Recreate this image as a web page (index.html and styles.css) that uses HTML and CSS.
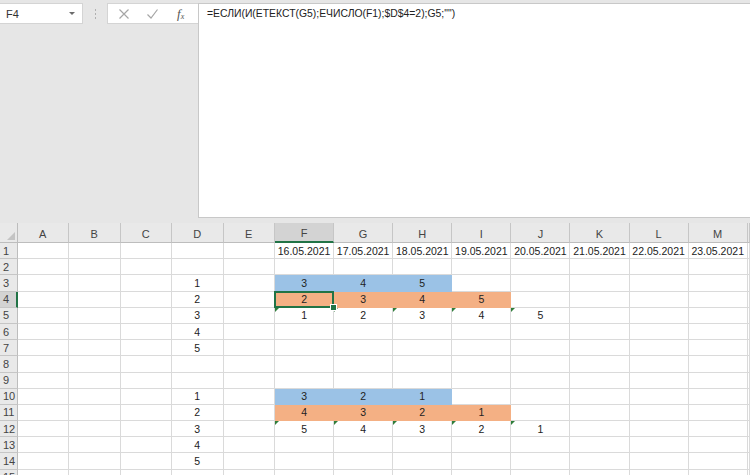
FILE: index.html
```html
<!DOCTYPE html>
<html lang="ru">
<head>
  <meta charset="UTF-8" />
  <title>Книга1 - Excel</title>
  <link rel="stylesheet" href="styles.css">
</head>
<body>
  <div class="toolbar">
    <div class="left-pane">
      <div class="name-box">
        <span>F4</span>
        <span class="drop"></span>
      </div>
      <div class="grip"><i></i><i></i><i></i></div>
      <div class="fx-buttons">
        <svg class="btn" width="12" height="12" viewBox="0 0 12 12">
          <path d="M1.5 1.5L10.5 10.5M10.5 1.5L1.5 10.5" stroke="#a6a6a6" stroke-width="1.2" fill="none"/>
        </svg>
        <svg class="btn" width="13" height="12" viewBox="0 0 13 12">
          <path d="M1.5 6.5L5 10L11.5 1.5" stroke="#a6a6a6" stroke-width="1.2" fill="none"/>
        </svg>
        <span class="fx">f<sub>x</sub></span>
      </div>
    </div>
    <div class="formula">=ЕСЛИ(И(ЕТЕКСТ(G5);ЕЧИСЛО(F1);$D$4=2);G5;"")</div>
  </div>

  <div class="sheet" id="sheet"></div>

  <script src="script.js"></script>
</body>
</html>
```

FILE: styles.css
```css
:root {
  --chrome: #e6e6e6;
  --header: #e9e9e9;
  --header-sel: #d3d3d3;
  --header-line: #c6c6c6;
  --grid: #dadada;
  --green: #217346;
  --blue: #9bc2e6;
  --orange: #f4b084;
}

body {
  margin: 0;
  width: 750px;
  height: 475px;
  overflow: hidden;
  background: var(--chrome);
  font-family: "Liberation Sans", Arial, sans-serif;
  color: #222;
}

.toolbar {
  display: flex;
  height: 218px;
}

.left-pane {
  width: 198px;
  display: flex;
  align-items: flex-start;
  padding-top: 3px;
  box-sizing: border-box;
}

.name-box {
  width: 83px;
  height: 21px;
  background: #fff;
  border: 1px solid #d4d4d4;
  border-left: none;
  box-sizing: border-box;
  display: flex;
  align-items: center;
  justify-content: space-between;
  padding: 0 7px 0 6px;
  font-size: 11px;
  color: #333;
}

.drop {
  width: 0;
  height: 0;
  border-left: 3px solid transparent;
  border-right: 3px solid transparent;
  border-top: 3px solid #6b6b6b;
}

.grip {
  width: 24px;
  height: 21px;
  display: flex;
  flex-direction: column;
  align-items: center;
  justify-content: center;
  gap: 2px;
}

.grip i {
  width: 1px;
  height: 2px;
  background: #b0b0b0;
}

.fx-buttons {
  width: 91px;
  height: 21px;
  background: #fff;
  border: 1px solid #d4d4d4;
  border-right: none;
  box-sizing: border-box;
  display: flex;
  align-items: center;
  padding-left: 10px;
  gap: 16px;
}

.fx {
  font-family: "Liberation Serif", "Times New Roman", serif;
  font-style: italic;
  font-size: 13px;
  color: #555;
  margin-left: 2px;
}

.fx sub {
  font-size: 8px;
  vertical-align: -1px;
}

.formula {
  flex: 1;
  margin-top: 3px;
  background: #fff;
  border: 1px solid #c8c8c8;
  border-right: none;
  padding: 4px 0 0 8px;
  font-size: 10.4px;
  color: #222;
  white-space: nowrap;
}

.sheet {
  margin-top: 5px;
  display: grid;
  grid-template-columns: 17.5px repeat(5, 51.5px) repeat(8, 59.1px) 1fr;
  grid-template-rows: 20px repeat(15, 16.2px);
  background: #fff;
}

.cell {
  position: relative;
  border-right: 1px solid var(--grid);
  border-bottom: 1px solid var(--grid);
  box-sizing: border-box;
  display: flex;
  align-items: center;
  justify-content: center;
  font-size: 10.5px;
  white-space: nowrap;
  overflow: visible;
}

.col-head {
  background: var(--header);
  border-right: 1px solid var(--header-line);
  border-bottom: 1px solid #bdbdbd;
  color: #444;
  font-size: 11px;
  padding-top: 2px;
}

.row-head {
  background: var(--header);
  border-right: 1px solid #bdbdbd;
  border-bottom: 1px solid var(--header-line);
  justify-content: flex-start;
  padding-left: 3px;
  color: #444;
  font-size: 11px;
}

.col-head.sel {
  background: var(--header-sel);
  border-bottom: 2px solid var(--green);
}

.row-head.sel {
  background: var(--header-sel);
  border-right: 2px solid var(--green);
}

.corner {
  background: var(--header);
  border-right: 1px solid #bdbdbd;
  border-bottom: 1px solid #bdbdbd;
}

.corner::after {
  content: "";
  position: absolute;
  right: 2px;
  bottom: 2px;
  border-left: 8px solid transparent;
  border-bottom: 8px solid #c4c4c4;
}

.blue {
  background: var(--blue);
  border-color: var(--blue);
}

.orange {
  background: var(--orange);
  border-color: var(--orange);
}

.flag::before {
  content: "";
  position: absolute;
  left: 0;
  top: 0;
  border-top: 4px solid #2f7d3a;
  border-right: 4px solid transparent;
}

.active::after {
  content: "";
  position: absolute;
  left: -1px;
  top: -1px;
  right: -1px;
  bottom: -1px;
  border: 2px solid var(--green);
  z-index: 2;
}

.handle {
  position: absolute;
  right: -4px;
  bottom: -4px;
  width: 5px;
  height: 5px;
  background: var(--green);
  border: 1px solid #fff;
  z-index: 3;
}
```

FILE: script.js
```js
const cols = ['A', 'B', 'C', 'D', 'E', 'F', 'G', 'H', 'I', 'J', 'K', 'L', 'M', ''];

const values = {
  F1: '16.05.2021', G1: '17.05.2021', H1: '18.05.2021', I1: '19.05.2021',
  J1: '20.05.2021', K1: '21.05.2021', L1: '22.05.2021', M1: '23.05.2021',
  D3: 1, D4: 2, D5: 3, D6: 4, D7: 5,
  F3: 3, G3: 4, H3: 5,
  F4: 2, G4: 3, H4: 4, I4: 5,
  F5: 1, G5: 2, H5: 3, I5: 4, J5: 5,
  D10: 1, D11: 2, D12: 3, D13: 4, D14: 5,
  F10: 3, G10: 2, H10: 1,
  F11: 4, G11: 3, H11: 2, I11: 1,
  F12: 5, G12: 4, H12: 3, I12: 2, J12: 1
};

const blue = ['F3', 'G3', 'H3', 'F10', 'G10', 'H10'];
const orange = ['F4', 'G4', 'H4', 'I4', 'F11', 'G11', 'H11', 'I11'];
const flags = ['F5', 'G5', 'H5', 'I5', 'J5', 'F12', 'G12', 'H12', 'I12', 'J12'];
const active = 'F4';

const sheet = document.getElementById('sheet');

function addCell(cls, text) {
  const div = document.createElement('div');
  div.className = 'cell ' + cls;
  if (text !== undefined) div.textContent = text;
  sheet.appendChild(div);
  return div;
}

addCell('corner');
cols.forEach(c => {
  addCell('col-head' + (c === 'F' ? ' sel' : ''), c);
});

for (let r = 1; r <= 15; r++) {
  addCell('row-head' + (r === 4 ? ' sel' : ''), r);
  cols.forEach(c => {
    const ref = c + r;
    let cls = '';
    if (blue.includes(ref)) cls += ' blue';
    if (orange.includes(ref)) cls += ' orange';
    if (flags.includes(ref)) cls += ' flag';
    if (ref === active) cls += ' active';
    const cell = addCell(cls, values[ref]);
    if (ref === active) {
      const h = document.createElement('span');
      h.className = 'handle';
      cell.appendChild(h);
    }
  });
}
```
